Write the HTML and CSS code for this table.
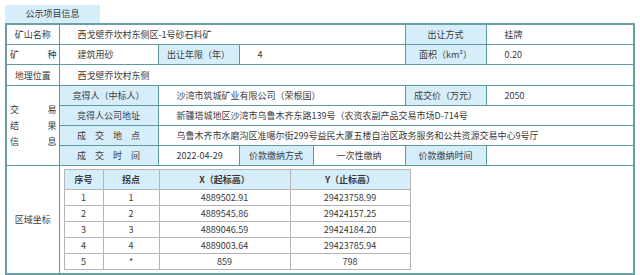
FILE: index.html
```html
<!DOCTYPE html>
<html lang="zh-CN">
<head>
<meta charset="utf-8">
<title>公示项目信息</title>
<link rel="stylesheet" href="styles.css">
</head>
<body>
<div class="page">
  <div class="tab">公示项目信息</div>
  <table class="info">
    <colgroup>
      <col class="c1"><col class="c2"><col class="c3"><col class="c4"><col class="c5"><col class="c6"><col class="c7">
    </colgroup>
    <tr>
      <td class="lbl">矿山名称</td>
      <td class="val" colspan="4">西戈壁乔坎村东侧区-1号砂石料矿</td>
      <td class="blue">出让方式</td>
      <td class="val">挂牌</td>
    </tr>
    <tr>
      <td class="lbl"><span class="just"><span>矿</span><span>种</span></span></td>
      <td class="val">建筑用砂</td>
      <td class="blue">出让年限（年）</td>
      <td class="val" colspan="2">4</td>
      <td class="blue">面积（km²）</td>
      <td class="val">0.20</td>
    </tr>
    <tr class="tall">
      <td class="lbl">地理位置</td>
      <td class="val" colspan="6">西戈壁乔坎村东侧</td>
    </tr>
    <tr>
      <td class="lbl side" rowspan="4">
        <span class="just"><span>交</span><span>易</span></span>
        <span class="just"><span>结</span><span>果</span></span>
        <span class="just"><span>信</span><span>息</span></span>
      </td>
      <td class="blue">竞得人（中标人）</td>
      <td class="val" colspan="3">沙湾市筑城矿业有限公司（荣根国）</td>
      <td class="blue">成交价（万元）</td>
      <td class="val">2050</td>
    </tr>
    <tr>
      <td class="blue">竞得人公司地址</td>
      <td class="val" colspan="5">新疆塔城地区沙湾市乌鲁木齐东路139号（农资农副产品交易市场D-714号</td>
    </tr>
    <tr>
      <td class="blue">成　交　地　点</td>
      <td class="val" colspan="5">乌鲁木齐市水磨沟区准噶尔街299号益民大厦五楼自治区政务服务和公共资源交易中心9号厅</td>
    </tr>
    <tr>
      <td class="blue">成　交　时　间</td>
      <td class="val">2022-04-29</td>
      <td class="blue">价款缴纳方式</td>
      <td class="mid">一次性缴纳</td>
      <td class="blue">价款缴纳时间</td>
      <td class="val"></td>
    </tr>
    <tr>
      <td class="lbl">区域坐标</td>
      <td class="holder" colspan="6">
        <table class="coords">
          <colgroup>
            <col class="k1"><col class="k2"><col class="k3"><col class="k4">
          </colgroup>
          <tr class="head"><th>序号</th><th>拐点</th><th>X（起标高）</th><th>Y（止标高）</th></tr>
          <tr><td>1</td><td>1</td><td>4889502.91</td><td>29423758.99</td></tr>
          <tr><td>2</td><td>2</td><td>4889545.86</td><td>29424157.25</td></tr>
          <tr><td>3</td><td>3</td><td>4889046.59</td><td>29424184.20</td></tr>
          <tr><td>4</td><td>4</td><td>4889003.64</td><td>29423785.94</td></tr>
          <tr><td>5</td><td>*</td><td>859</td><td>798</td></tr>
        </table>
      </td>
    </tr>
  </table>
</div>
</body>
</html>
```

FILE: styles.css
```css
html, body {
  margin: 0;
  padding: 0;
  background: #ffffff;
}
body {
  font-family: "Noto Sans CJK SC", "Noto Sans", sans-serif;
  font-size: 9px;
  color: #3a3a3a;
}
.page {
  padding: 5px 0 0 5px;
}
.tab {
  width: 95px;
  height: 18px;
  line-height: 18px;
  background: #d6eefa;
  text-align: center;
}
.info {
  border-collapse: collapse;
  table-layout: fixed;
  width: 629px;
  border: 2px solid #6a9fa4;
}
.info col.c1 { width: 53px; }
.info col.c2 { width: 99px; }
.info col.c3 { width: 81px; }
.info col.c4 { width: 74px; }
.info col.c5 { width: 92px; }
.info col.c6 { width: 81px; }
.info col.c7 { width: 148px; }
.info > tbody > tr > td,
.info > tr > td {
  border: 1px solid #5f999e;
  height: 19px;
  padding: 0;
  white-space: nowrap;
  overflow: hidden;
}
.info tr.tall > td {
  height: 20px;
}
.lbl {
  text-align: center;
}
.blue {
  background: #d6eefa;
  text-align: center;
}
.val {
  text-align: left;
  padding-left: 18px !important;
}
.mid {
  text-align: center;
}
.just {
  display: flex;
  justify-content: space-between;
  padding: 0 2px 0 3px;
  line-height: 16px;
}
.side {
  vertical-align: middle;
}
.holder {
  padding: 3px 0 3px 4px !important;
  vertical-align: top;
}
.coords {
  border-collapse: collapse;
  table-layout: fixed;
  width: 347px;
  border: 1px solid #9a9a9a;
}
.coords col.k1 { width: 39px; }
.coords col.k2 { width: 56px; }
.coords col.k3 { width: 131px; }
.coords col.k4 { width: 120px; }
.coords th,
.coords td {
  border: 1px solid #b5b5b5;
  text-align: center;
  padding: 0;
  height: 15px;
  font-weight: normal;
}
.coords tr.head th {
  background: #d6eefa;
  font-weight: bold;
  height: 19px;
}
```
